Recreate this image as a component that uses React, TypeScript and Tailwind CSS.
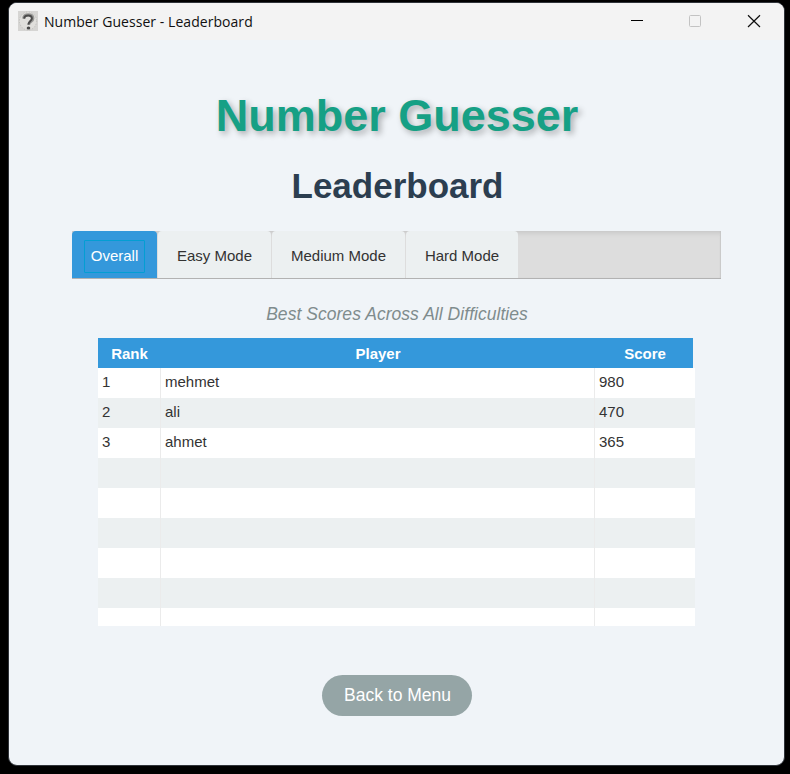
import React from "react";

const rows: [string, string, string][] = [
  ["1", "mehmet", "980"],
  ["2", "ali", "470"],
  ["3", "ahmet", "365"],
  ["", "", ""],
  ["", "", ""],
  ["", "", ""],
  ["", "", ""],
  ["", "", ""],
  ["", "", ""],
];

function AppIcon() {
  return (
    <svg width="20" height="20" viewBox="0 0 20 20" className="block">
      <rect width="20" height="20" fill="#d6d5d3" />
      <ellipse cx="10" cy="10" rx="8.6" ry="9" fill="#e0dfdc" stroke="#bdbcba" strokeWidth="0.9" strokeDasharray="1.2 1.6" />
      <path d="M5.6 7.6C5.8 4.9 7.8 3.8 10.3 3.8c2.9 0 4.6 1.4 4.6 3.6 0 3.3-4 3.1-4.2 6.2" fill="none" stroke="#999997" strokeWidth="3" />
      <path d="M6.2 7.6C6.3 5.4 8 4.4 10.2 4.4c2.3 0 3.7 1 3.7 2.8 0 2.7-3.4 2.8-3.5 6.4" fill="none" stroke="#4b4b4b" strokeWidth="2" />
      <ellipse cx="10.5" cy="17" rx="1.8" ry="1.5" fill="#484848" />
    </svg>
  );
}

function TitleBar() {
  return (
    <div className="flex h-[37px] items-start bg-[#f3f3f3] pl-[9px]">
      <div className="pt-2">
        <AppIcon />
      </div>
      <span className="ml-[6px] flex-1 whitespace-nowrap pt-[9px] font-['Open_Sans',sans-serif] text-[14px] leading-5 tracking-[0.05px] text-[#101010]">
        Number Guesser - Leaderboard
      </span>
      <svg width="175" height="37" viewBox="0 0 175 37" fill="none">
        <path d="M22 17.5h12" stroke="#000" />
        <rect x="80.5" y="12.5" width="11" height="11" rx="1" stroke="#c3c3c3" />
        <path d="M139 12.2l12 11.8M151 12.2L139 24" stroke="#111" strokeWidth="1.2" />
      </svg>
    </div>
  );
}

function Tabs() {
  return (
    <div className="ml-[63px] mt-[25px] flex h-12 w-[649px] border-b border-[#b2b2b2] bg-[#dddddd] text-[15px] leading-[18px] text-[#333333] shadow-[inset_0_5px_5px_-3px_#c6c6c6,inset_-1px_0_1px_#c8c8c8]">
      <div className="flex w-[85px] items-start rounded-t-[4px] bg-[#3498db] pl-3 pt-[9px] text-white">
        <span className="flex h-[33px] w-[61px] justify-center rounded-[1px] border border-[#039ed3] pt-[6px]">Overall</span>
      </div>
      <div className="ml-px flex w-[113px] items-center justify-center rounded-t-[4px] bg-[#ecf0f1] pt-[3px]">Easy Mode</div>
      <div className="ml-px flex w-[133px] items-center justify-center rounded-t-[4px] bg-[#ecf0f1] pt-[3px]">Medium Mode</div>
      <div className="ml-px flex w-[112px] items-center justify-center rounded-t-[4px] bg-[#ecf0f1] pt-[3px]">Hard Mode</div>
    </div>
  );
}

function ScoreTable() {
  return (
    <div className="ml-[89px] mt-[14px] h-[288px] w-[597px] overflow-hidden text-[15px] leading-[28px] text-[#333333]">
      <div className="flex h-[30px] w-[595px] bg-[#3498db] pt-[2px] text-center font-bold text-white">
        <div className="w-[63px] shrink-0">Rank</div>
        <div className="w-[434px] shrink-0">Player</div>
        <div className="w-[100px] shrink-0">Score</div>
      </div>
      {rows.map(([rank, player, score], i) => (
        <div key={i} className={i % 2 ? "flex h-[30px] bg-[#ecf0f1]" : "flex h-[30px] bg-white"}>
          <div className="w-[63px] border-r border-[#ebebeb] pl-1">{rank}</div>
          <div className="w-[434px] border-r border-[#ebebeb] pl-1">{player}</div>
          <div className="w-[100px] pl-1">{score}</div>
        </div>
      ))}
    </div>
  );
}

export default function App() {
  return (
    <div className="h-[774px] w-[790px] overflow-hidden bg-black pl-[8px] pt-[2px] font-['Liberation_Sans',Arial,sans-serif]">
      <div className="h-[764px] w-[777px] overflow-hidden rounded-[9px] border border-[#30343a] bg-[#f0f4f8]">
        <TitleBar />
        <h1 className="mt-[51px] pl-px text-center text-[45px] font-bold leading-[50px] text-[#16a085] [text-shadow:3px_3px_6px_rgba(0,0,0,0.3)]">
          Number Guesser
        </h1>
        <h2 className="mt-[25px] pl-[2px] text-center text-[35px] font-bold leading-[40px] text-[#2c3e50]">Leaderboard</h2>
        <Tabs />
        <p className="mt-[25px] pl-px text-center text-[17.5px] italic leading-5 tracking-[0.04px] text-[#7f8c8d]">
          Best Scores Across All Difficulties
        </p>
        <ScoreTable />
        <button className="mx-auto mt-[49px] block h-[41px] w-[150px] rounded-full bg-[#95a5a6] pl-[2px] text-[17.5px] leading-[41px] text-white">
          Back to Menu
        </button>
      </div>
    </div>
  );
}
